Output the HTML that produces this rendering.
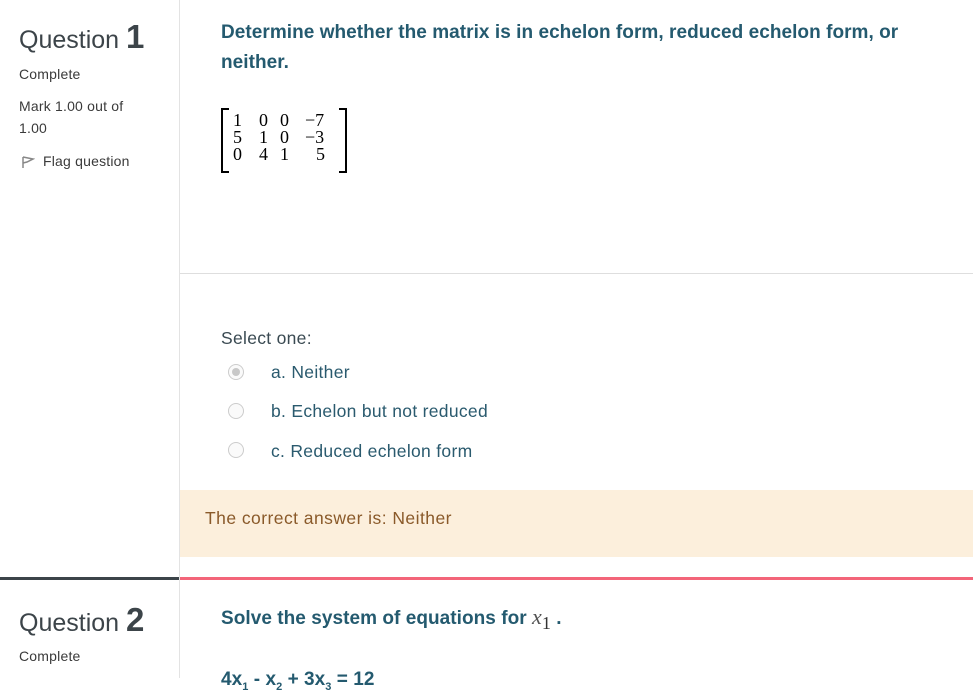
<!DOCTYPE html>
<html><head><meta charset="utf-8"><style>
*{margin:0;padding:0;box-sizing:border-box}
body{width:973px;height:678px;overflow:hidden;background:#fff;font-family:"Liberation Sans",sans-serif;position:relative;color:#333}
.a{position:absolute;white-space:nowrap}
.qh{font-size:25px;color:#3c4449;letter-spacing:0}
.qh b{font-size:33px;font-weight:bold;color:#3c4449}
.sm{font-size:14px;color:#3a3a3a;letter-spacing:0.2px}
.qt{font-size:19px;font-weight:bold;color:#245a6f;letter-spacing:0.05px}
.opt{font-size:17.5px;color:#2a5a6e;letter-spacing:0.3px}
.rad{position:absolute;width:16px;height:16px;border:1px solid #ccc;border-radius:50%;background:#fafafa}
.m{font-family:"Liberation Serif",serif;font-size:18px;color:#000;line-height:18px}
</style></head><body>
<div class="a" style="left:179px;top:0;width:1px;height:578px;background:#e3e3e3"></div>
<div class="a" style="left:179px;top:578px;width:1px;height:100px;background:#e3e3e3"></div>
<div class="a" style="left:180px;top:273px;width:793px;height:1px;background:#dedede"></div>

<div class="a qh" style="left:19px;top:18px">Question <b>1</b></div>
<div class="a sm" style="left:19px;top:66px">Complete</div>
<div class="a sm" style="left:19px;top:98px">Mark 1.00 out of</div>
<div class="a sm" style="left:19px;top:120px">1.00</div>
<svg class="a" style="left:21px;top:155px" width="14" height="14" viewBox="0 0 14 14"><path d="M2 2 L2 13 M2 2 L12 4 L6 7 L2 8" fill="none" stroke="#888" stroke-width="1.5"/></svg>
<div class="a sm" style="left:43px;top:153px">Flag question</div>

<div class="a qt" style="left:221px;top:22px">Determine whether the matrix is in echelon form, reduced echelon form, or</div>
<div class="a qt" style="left:221px;top:52px">neither.</div>

<div class="a" style="left:221px;top:108px;width:8px;height:65px;border:2px solid #000;border-right:none"></div>
<div class="a" style="left:339px;top:108px;width:8px;height:65px;border:2px solid #000;border-left:none"></div>
<div class="a m" style="left:233px;top:111px">1</div><div class="a m" style="left:259px;top:111px">0</div><div class="a m" style="left:280px;top:111px">0</div><div class="a m" style="left:305px;top:111px">−7</div>
<div class="a m" style="left:233px;top:128px">5</div><div class="a m" style="left:259px;top:128px">1</div><div class="a m" style="left:280px;top:128px">0</div><div class="a m" style="left:305px;top:128px">−3</div>
<div class="a m" style="left:233px;top:145px">0</div><div class="a m" style="left:259px;top:145px">4</div><div class="a m" style="left:280px;top:145px">1</div><div class="a m" style="left:316px;top:145px">5</div>

<div class="a opt" style="left:221px;top:328px;color:#3a4a52">Select one:</div>
<div class="rad" style="left:228px;top:364px"><div style="position:absolute;left:3px;top:3px;width:8px;height:8px;border-radius:50%;background:#c8c8c8"></div></div>
<div class="a opt" style="left:271px;top:362px">a. Neither</div>
<div class="rad" style="left:228px;top:403px"></div>
<div class="a opt" style="left:271px;top:401px">b. Echelon but not reduced</div>
<div class="rad" style="left:228px;top:442px"></div>
<div class="a opt" style="left:271px;top:441px">c. Reduced echelon form</div>

<div class="a" style="left:180px;top:490px;width:793px;height:67px;background:#fcefdc"></div>
<div class="a opt" style="left:205px;top:508px;color:#8a5a2a;letter-spacing:0.45px">The correct answer is: Neither</div>

<div class="a" style="left:0;top:577px;width:179px;height:3px;background:#3c4449"></div>
<div class="a" style="left:180px;top:577px;width:793px;height:3px;background:#f36579"></div>

<div class="a qh" style="left:19px;top:601px">Question <b>2</b></div>
<div class="a sm" style="left:19px;top:648px">Complete</div>
<div class="a qt" style="left:221px;top:604px">Solve the system of equations for <span style="font-family:'Liberation Serif',serif;font-style:italic;font-weight:normal;font-size:22px;color:#555">x</span><span style="font-family:'Liberation Serif',serif;font-weight:normal;font-size:18px;color:#333;position:relative;top:5px">1</span> .</div>
<div class="a qt" style="left:221px;top:669px">4x<sub style="font-size:11px">1</sub> - x<sub style="font-size:11px">2</sub> + 3x<sub style="font-size:11px">3</sub> = 12</div>
</body></html>
